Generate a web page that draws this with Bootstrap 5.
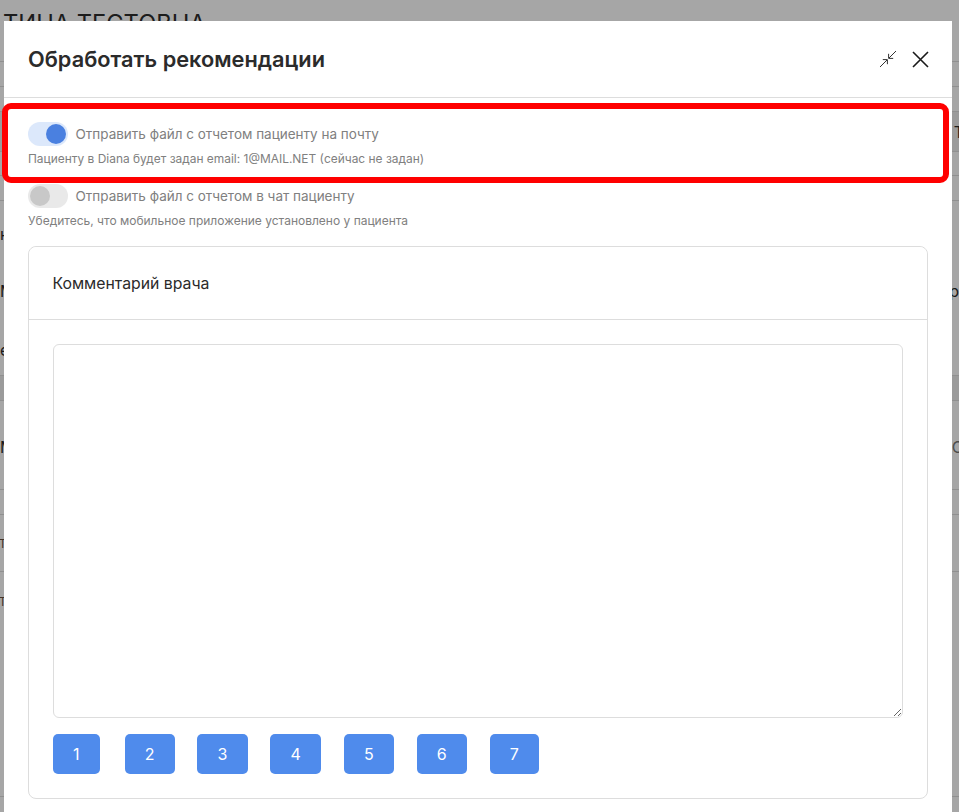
<!DOCTYPE html>
<html lang="ru">
<head>
<meta charset="utf-8">
<title>Обработать рекомендации</title>
<link href="https://cdn.jsdelivr.net/npm/bootstrap@5.3.0/dist/css/bootstrap.min.css" rel="stylesheet">
<style>
html,body{height:100%;overflow:hidden}
body{font-family:Inter,"Liberation Sans",sans-serif;background:#fff;color:#2b2b2b}
.bg-title{height:62px;font-size:23.7px;line-height:29px;padding:9px 0 0 3px;white-space:nowrap;border-bottom:1px solid #ddd}
.bg-row{display:flex;justify-content:space-between;align-items:center;border-bottom:1px solid #ddd;font-size:16px;overflow:hidden;white-space:nowrap;box-sizing:border-box}
.bg-row.band{background:#eee}
.bg-stack{display:block;padding-top:21px}
.bg-line{display:flex;justify-content:space-between;height:57px}
.bg-line + .bg-line{height:59px}
.edge-r{margin-right:-5px}
.soft{color:#6b5140;font-size:11.5px;margin-left:-1px}
.grey{color:#777}
.h25{height:25px}.h40{height:40px}.h24{height:24px}.h175{height:175px}.h89{height:89px}.h57{height:57px}.h225{height:225px}
.shift-d{padding-top:4px}
.top-text{align-items:flex-start;padding-top:22px}
.dim{position:fixed;inset:0;background:rgba(0,0,0,.35)}
.sheet{position:fixed;left:4px;top:21px;width:948px;height:830px;background:#fff}
.sheet-head{height:77px;padding:1px 24px 0;border-bottom:1px solid #ddd}
.sheet-title{font-size:21.75px;font-weight:600;color:#2b2b2b;line-height:1;margin:0}
.head-btn{background:none;border:0;padding:0;line-height:0}
.head-tools{gap:15px;margin-right:-1px;margin-top:-1px}
.sheet-body{padding:24px 24px 0}
.opt{height:24px;margin:0;padding:0;display:flex;align-items:center}
.opt .form-check-input,.opt .form-check-input:checked{width:40px;height:24px;margin:0;float:none;border:0;background-color:#dce8fb;background-size:auto 20px;background-position:right 2px center;--bs-form-switch-bg:url("data:image/svg+xml,%3csvg xmlns='http://www.w3.org/2000/svg' viewBox='-4 -4 8 8'%3e%3ccircle r='4' fill='%234a80e0'/%3e%3c/svg%3e");box-shadow:none}
.opt .form-check-input:not(:checked){background-color:#e9e9e9;background-position:left 2px center;--bs-form-switch-bg:url("data:image/svg+xml,%3csvg xmlns='http://www.w3.org/2000/svg' viewBox='-4 -4 8 8'%3e%3ccircle r='4' fill='%23c8c8c8'/%3e%3c/svg%3e")}
.opt .form-check-label{font-size:13.5px;line-height:24px;color:#808080;margin-left:7.5px;opacity:1}
.hint{font-size:11.95px;line-height:15px;color:#808080;margin:5px 0 0}
.hint-chat{font-size:12px;line-height:16px;margin-top:5.2px}
.opt-second{margin-top:18px}
.note-card{margin-top:16.8px;height:553px;border:1px solid #ddd;border-radius:8px;--bs-card-bg:#fff}
.note-head{height:73px;padding:2px 24px 0 23.5px;background:#fff;border-bottom:1px solid #ddd;border-radius:8px 8px 0 0;font-size:15.8px;color:#2b2b2b;display:flex;align-items:center}
.note-body{padding:24px 24px 0}
.note-area{height:374px;border:1px solid #ddd;border-radius:6px;box-shadow:none}
.num-row{margin-top:16px;gap:22.7px}
.num-btn{height:40px;padding:0 20.2px;background:#4f8bec;border:0;border-radius:5px;color:#fff;font-size:16px;line-height:40px}
.num-btn:first-child{padding:0 20px;margin-right:2.4px}
.annot{position:fixed;left:2px;top:103px;width:947px;height:80px;border:6px solid #f00;border-radius:9px;pointer-events:none}
</style>
</head>
<body>
<div>
  <div class="bg-title">ТИНА ТЕСТОВНА</div>
  <div class="bg-row h25"></div>
  <div class="bg-row h25"></div>
  <div class="bg-row band h40"><span></span><span class="edge-r">Т</span></div>
  <div class="bg-row h24"></div>
  <div class="bg-row h25"></div>
  <div class="bg-row h175 bg-stack">
    <div class="bg-line"><span>н</span><span></span></div>
    <div class="bg-line"><span>М</span><span>ор</span></div>
    <div>е</div>
  </div>
  <div class="bg-row band h25"></div>
  <div class="bg-row h89 shift-d"><span>М</span><span class="grey edge-r">О</span></div>
  <div class="bg-row h25"></div>
  <div class="bg-row h57 shift-d"><span class="soft">Т</span><span></span></div>
  <div class="bg-row h225 top-text"><span class="soft">Т</span><span></span></div>
</div>

<div class="dim"></div>

<div class="sheet">
  <div class="sheet-head d-flex align-items-center justify-content-between">
    <h5 class="sheet-title">Обработать рекомендации</h5>
    <div class="d-flex align-items-center head-tools">
      <button class="head-btn" type="button" aria-label="Свернуть">
        <svg width="18" height="18" viewBox="0 0 18 18" fill="none" stroke="#333" stroke-width="1"><path d="M1 17 8 10M3.8 9.6H8.4V14.2M17 1 10 8M9.6 3.8V8.4H14.2"/></svg>
      </button>
      <button class="head-btn" type="button" aria-label="Закрыть">
        <svg width="17" height="17" viewBox="0 0 17 17" fill="none" stroke="#1a1a1a" stroke-width="1.6"><path d="M1 1 16 16M16 1 1 16"/></svg>
      </button>
    </div>
  </div>
  <div class="sheet-body">
    <div class="form-check form-switch opt">
      <input class="form-check-input" type="checkbox" role="switch" id="optMail" checked>
      <label class="form-check-label" for="optMail">Отправить файл с отчетом пациенту на почту</label>
    </div>
    <p class="hint">Пациенту в Diana будет задан email: 1@MAIL.NET (сейчас не задан)</p>
    <div class="form-check form-switch opt opt-second">
      <input class="form-check-input" type="checkbox" role="switch" id="optChat">
      <label class="form-check-label" for="optChat">Отправить файл с отчетом в чат пациенту</label>
    </div>
    <p class="hint hint-chat">Убедитесь, что мобильное приложение установлено у пациента</p>
    <div class="card note-card">
      <div class="note-head">Комментарий врача</div>
      <div class="note-body">
        <textarea class="form-control note-area" aria-label="Комментарий врача"></textarea>
        <div class="d-flex num-row">
          <button class="btn num-btn" type="button">1</button>
          <button class="btn num-btn" type="button">2</button>
          <button class="btn num-btn" type="button">3</button>
          <button class="btn num-btn" type="button">4</button>
          <button class="btn num-btn" type="button">5</button>
          <button class="btn num-btn" type="button">6</button>
          <button class="btn num-btn" type="button">7</button>
        </div>
      </div>
    </div>
  </div>
</div>

<div class="annot"></div>
<script src="https://cdn.jsdelivr.net/npm/bootstrap@5.3.0/dist/js/bootstrap.bundle.min.js"></script>
</body>
</html>
